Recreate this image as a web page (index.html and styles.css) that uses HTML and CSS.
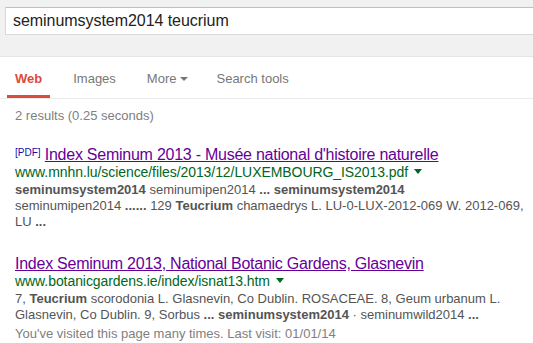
FILE: index.html
```html
<!DOCTYPE html>
<html lang="en">
<head>
  <meta charset="UTF-8" />
  <title>seminumsystem2014 teucrium - Search</title>
  <link rel="stylesheet" href="styles.css">
</head>
<body>
  <div class="top-bar">
    <div class="search-box">seminumsystem2014 teucrium</div>
  </div>

  <div class="tabs">
    <span class="tab active">Web</span>
    <span class="tab">Images</span>
    <span class="tab more">More<span class="caret"></span></span>
    <span class="tab">Search tools</span>
  </div>

  <div class="stats">2 results (0.25 seconds)</div>

  <div class="results">
    <div class="result">
      <div class="title"><span class="filetype">[PDF]</span> <a href="#">Index Seminum 2013 - Musée national d'histoire naturelle</a></div>
      <div class="url">www.mnhn.lu/science/files/2013/12/LUXEMBOURG_IS2013.pdf <span class="url-arrow"></span></div>
      <div class="snippet">
        <b>seminumsystem2014</b> seminumipen2014 <b>...</b> <b>seminumsystem2014</b><br>
        seminumipen2014 <b>......</b> 129 <b>Teucrium</b> chamaedrys L. LU-0-LUX-2012-069 W. 2012-069,<br>
        LU <b>...</b>
      </div>
    </div>

    <div class="result">
      <div class="title"><a href="#">Index Seminum 2013, National Botanic Gardens, Glasnevin</a></div>
      <div class="url">www.botanicgardens.ie/index/isnat13.htm <span class="url-arrow"></span></div>
      <div class="snippet">
        7, <b>Teucrium</b> scorodonia L. Glasnevin, Co Dublin. ROSACEAE. 8, Geum urbanum L.<br>
        Glasnevin, Co Dublin. 9, Sorbus <b>...</b> <b>seminumsystem2014</b> · seminumwild2014 <b>...</b>
      </div>
      <div class="visited">You've visited this page many times. Last visit: 01/01/14</div>
    </div>
  </div>
</body>
</html>
```

FILE: styles.css
```css
body {
  margin: 0;
  overflow: hidden;
  background-color: #fff;
  font-family: Arial, "Liberation Sans", sans-serif;
  font-size: 13px;
  color: #545454;
}
.top-bar {
  height: 57px;
  background-color: #f1f1f1;
  border-bottom: 1px solid #e5e5e5;
  padding: 7px 0 0 5px;
  box-sizing: border-box;
}
.search-box {
  height: 28px;
  box-sizing: border-box;
  background-color: #fff;
  border: 1px solid #d9d9d9;
  border-top-color: #c0c0c0;
  border-right: 0;
  padding-left: 7px;
  font-size: 16px;
  line-height: 26px;
  letter-spacing: -0.05px;
  color: #222;
}
.tabs {
  display: flex;
  padding-left: 7px;
  border-bottom: 1px solid #ebebeb;
}
.tab {
  padding: 14px 8px 8px;
  margin-right: 15px;
  line-height: 16px;
  color: #777;
  border-bottom: 3px solid transparent;
}
.tab.active {
  color: #dd4b39;
  font-weight: bold;
  border-bottom-color: #dd4b39;
}
.tab.more {
  margin-right: 12px;
}
.caret {
  display: inline-block;
  margin-left: 4px;
  vertical-align: 2px;
  border-top: 4px solid #777;
  border-left: 4px solid transparent;
  border-right: 4px solid transparent;
}
.stats {
  padding: 9px 0 0 15px;
  line-height: 16px;
  color: #808080;
}
.results {
  padding: 20px 0 0 15px;
}
.result {
  margin-bottom: 25px;
}
.result:last-child {
  margin-bottom: 0;
}
.title {
  font-size: 16px;
  line-height: 18px;
  letter-spacing: -0.25px;
}
.title a {
  color: #660099;
  text-decoration: underline;
}
.filetype {
  font-size: 10px;
  letter-spacing: 0;
  color: #1a0dab;
  vertical-align: 4px;
}
.url {
  color: #006621;
  font-size: 14px;
  line-height: 16px;
  letter-spacing: -0.07px;
  margin-bottom: 2px;
}
.url-arrow {
  display: inline-block;
  margin-left: 2px;
  vertical-align: 3px;
  border-top: 5px solid #006621;
  border-left: 4.5px solid transparent;
  border-right: 4.5px solid transparent;
}
.snippet {
  line-height: 16px;
}
.snippet b {
  color: #545454;
}
.visited {
  color: #808080;
  line-height: 18px;
  margin-top: 2px;
}
```
